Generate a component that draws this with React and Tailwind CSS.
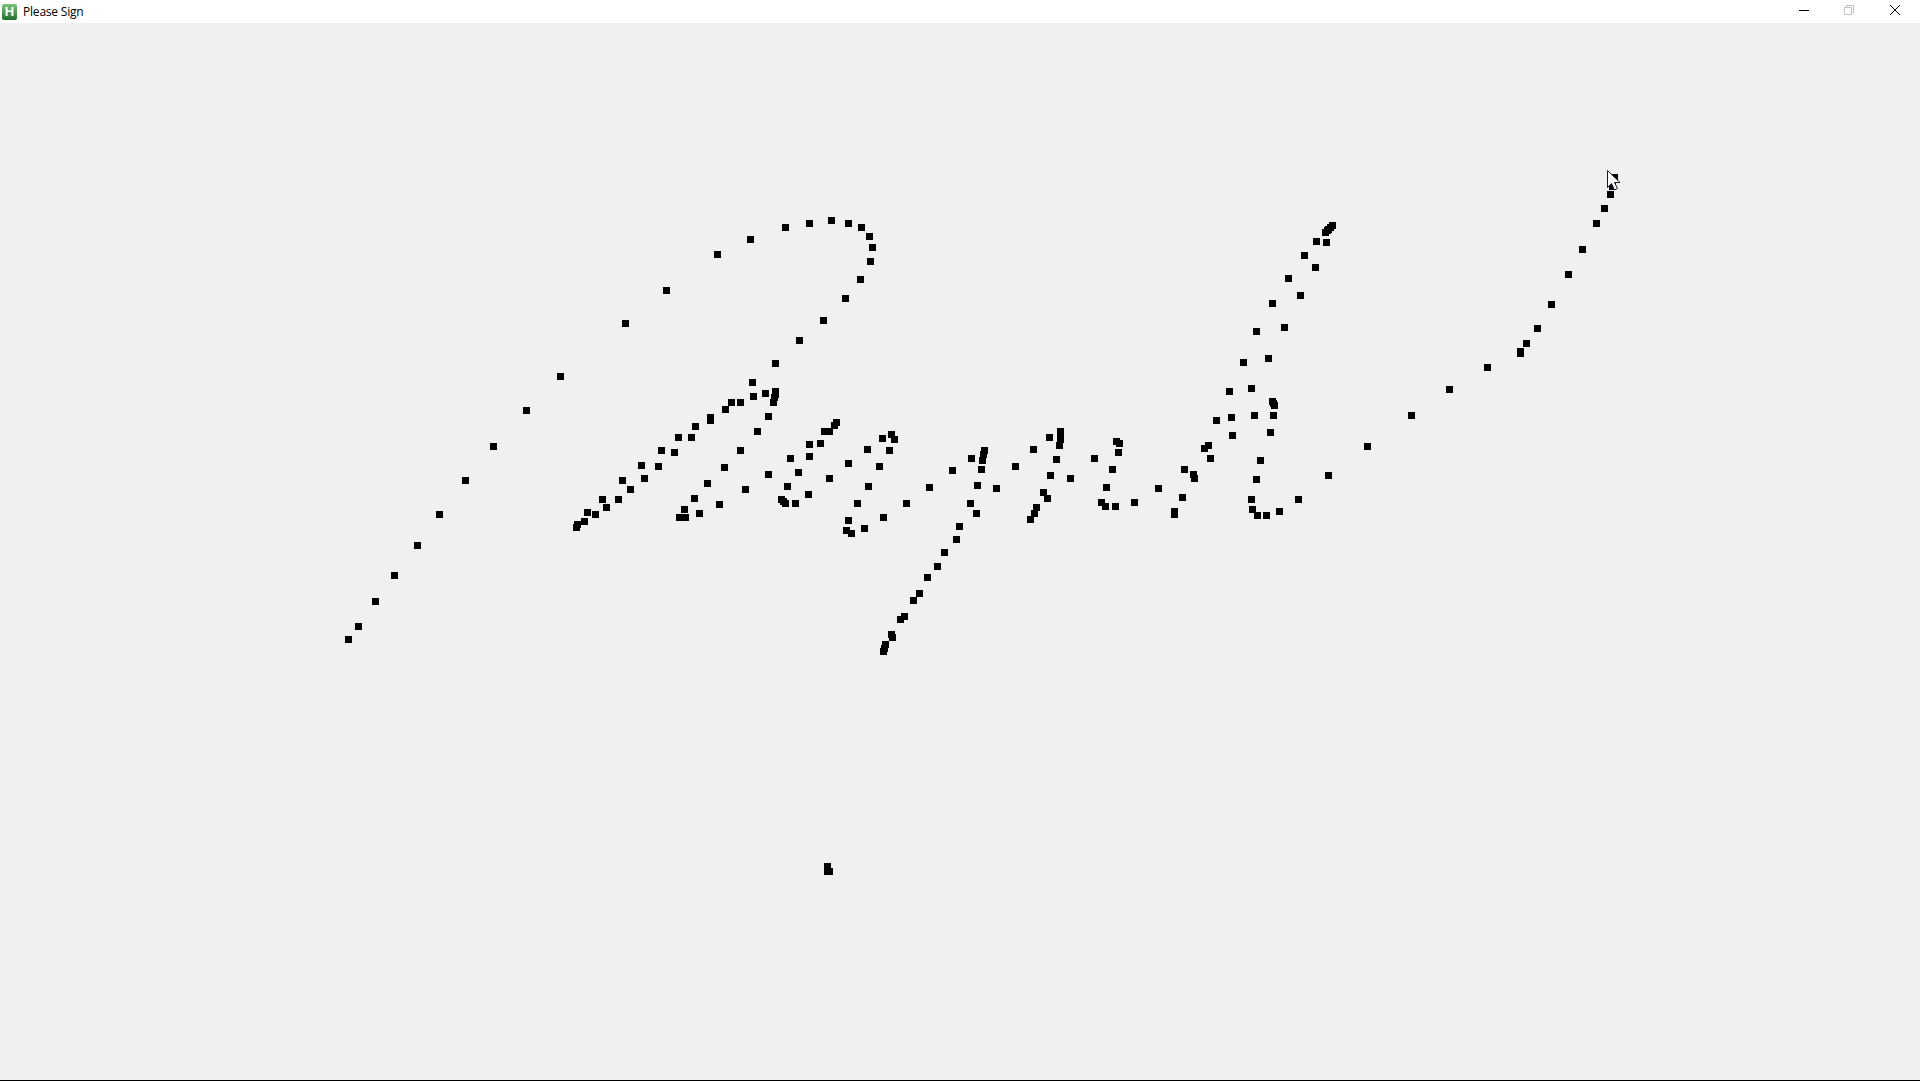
// Sampled pen positions, top-left of each 7x7 mark, in window coordinates
const strokes = [
  // long lead-in and loop
  [345,636],[355,623],[372,598],[391,572],[414,542],[436,511],[462,477],[490,443],[523,407],[557,373],[622,320],[663,287],[714,251],
  [747,236],[782,224],[806,220],[828,217],[845,220],[858,224],[866,233],[869,244],[867,258],[857,276],[842,295],[820,317],[796,337],[772,360],[749,379],
  [772,388],[772,391],[771,394],[770,399],[762,390],[750,393],[737,399],[728,399],[722,406],[707,414],[707,417],[765,413],[692,423],[754,428],
  [675,434],[688,434],[658,447],[671,449],[737,447],[638,462],[655,463],[721,464],[619,477],[641,475],[704,480],[627,486],[742,486],
  [599,496],[615,496],[691,495],[603,504],[716,501],[584,509],[592,511],[681,506],[696,510],[581,518],[574,521],[573,524],[676,514],[679,514],[682,514],
  // middle letters
  [833,419],[831,422],[826,428],[821,428],[806,441],[817,440],[787,455],[806,453],[845,460],[795,469],[765,471],[826,475],[784,483],[805,491],
  [778,496],[780,498],[782,500],[792,500],[854,500],[845,517],[843,527],[848,530],[861,525],[880,514],[903,500],[926,484],[949,467],[968,455],
  [888,431],[891,436],[879,435],[864,446],[886,447],[876,463],[865,483],
  // descender
  [981,447],[980,451],[979,457],[978,466],[974,482],[993,485],[967,500],[973,510],[956,523],[953,536],[941,549],[934,563],[924,574],[916,590],[910,597],
  [901,613],[897,616],[888,631],[889,634],[882,641],[881,645],[880,648],
  [1012,463],[1030,446],[1046,434],[1057,428],[1057,431],[1057,436],[1056,442],[1053,456],[1047,472],[1067,475],[1040,489],[1044,495],[1033,504],[1031,510],[1027,516],
  [1113,438],[1116,440],[1115,449],[1091,455],[1109,466],[1103,484],[1098,499],[1102,503],[1112,503],[1131,499],[1155,485],[1179,494],[1171,508],[1171,511],
  [1181,466],[1190,471],[1191,475],[1207,455],[1201,445],[1205,442],[1213,417],[1228,414],[1251,412],[1270,412],[1229,432],[1267,429],[1257,457],[1253,476],
  [1248,496],[1249,506],[1254,512],[1263,512],[1276,508],[1295,496],[1269,398],[1270,400],[1271,402],
  // tall d
  [1329,222],[1327,224],[1325,226],[1324,227],[1322,229],[1313,238],[1323,239],[1301,252],[1312,264],[1285,275],[1297,292],[1269,300],[1281,324],[1253,328],
  [1265,355],[1240,359],[1248,385],[1226,388],
  // exit stroke
  [1325,472],[1364,443],[1408,412],[1446,386],[1484,364],[1517,348],[1517,350],[1523,340],[1534,325],[1548,301],[1565,271],[1579,246],[1593,220],[1601,205],[1607,191],[1609,183],[1611,174],
  // stray dot
  [824,863],[824,868],[826,868],
];

function TitleBar() {
  return (
    <div className="h-[23px] shrink-0 bg-white flex items-center">
      <div className="ml-[2px] w-[15px] h-[16px] rounded-[2px] bg-gradient-to-b from-[#7cc47c] to-[#1f6f2c] flex items-center justify-center text-white font-bold text-[13px] leading-none font-['Liberation_Sans',sans-serif]">
        H
      </div>
      <span className="ml-[6px] text-[12px] text-black font-['Open_Sans',sans-serif] tracking-[-0.2px]">Please Sign</span>

      <div className="ml-auto mr-[3px] flex h-full">
        <div className="w-[45px] flex items-start justify-center pt-[5px] pr-[1px]">
          <svg width="10" height="10" viewBox="0 0 10 10" shapeRendering="crispEdges">
            <rect x="0" y="5" width="10" height="1" fill="#000" />
          </svg>
        </div>
        <div className="w-[45px] flex items-start justify-center pt-[5px] pr-[1px]">
          <svg width="10" height="10" viewBox="0 0 10 10" shapeRendering="crispEdges" fill="none" stroke="#c4c4c4">
            <path d="M0.5 2.500h7v7h-7z" />
            <path d="M2.500 2.500v-2h7v7h-2" />
          </svg>
        </div>
        <div className="w-[45px] flex items-start justify-center pt-[5px]">
          <svg width="10" height="10" viewBox="0 0 10 10" fill="none" stroke="#000" strokeWidth="1">
            <path d="M0 0L10 10M10 0L0 10" />
          </svg>
        </div>
      </div>
    </div>
  );
}

export default function App() {
  return (
    <div className="h-screen flex flex-col bg-[#f0f0f0] overflow-hidden">
      <TitleBar />

      {/* signature pad */}
      <svg className="flex-1 w-full min-h-0 block" shapeRendering="crispEdges">
        <g transform="translate(0,-23)">
          {strokes.map(([x, y], i) => (
            <rect key={i} x={x} y={y} width="7" height="7" fill="#000" />
          ))}
          {/* mouse pointer */}
          <path
            d="M1607.500 170.500v17l4-4 3 6.500 3-1.500-3-6h5.500z"
            fill="#fff"
            stroke="#1a1a2a"
            shapeRendering="auto"
          />
        </g>
      </svg>

      <div className="h-px shrink-0 bg-black" />
    </div>
  );
}
